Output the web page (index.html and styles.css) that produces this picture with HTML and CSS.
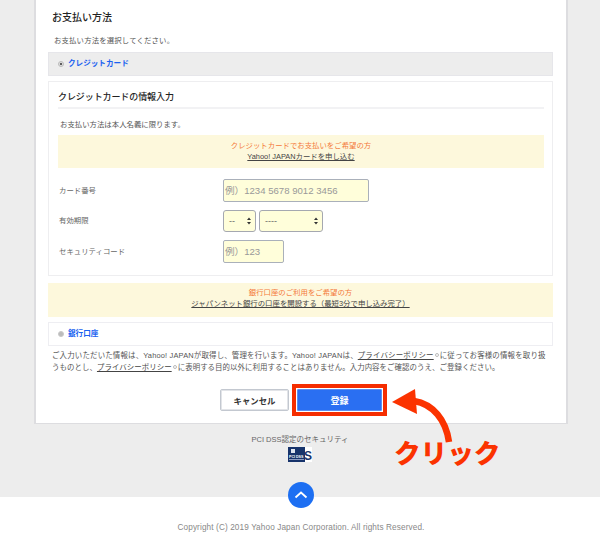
FILE: index.html
```html
<!DOCTYPE html>
<html lang="ja">
<head>
<meta charset="utf-8">
<title>お支払い方法</title>
<link rel="stylesheet" href="styles.css">
</head>
<body>
<div class="gray">
  <main class="card">
    <h2 class="title">お支払い方法</h2>
    <p class="lead">お支払い方法を選択してください。</p>
    <div class="method active"><span class="radio on"></span><a class="mlink">クレジットカード</a></div>
    <section class="panel">
      <h3 class="ptitle">クレジットカードの情報入力</h3>
      <p class="note">お支払い方法は本人名義に限ります。</p>
      <div class="promo inner">
        <div class="orange">クレジットカードでお支払いをご希望の方</div>
        <a class="plink">Yahoo! JAPANカードを申し込む</a>
      </div>
      <div class="rows">
        <div class="row r1"><label>カード番号</label><div class="field w146">例）1234 5678 9012 3456</div></div>
        <div class="row r2"><label>有効期限</label>
          <div class="sel w33"><span>--</span><svg class="updown" viewBox="0 0 5 9"><path d="M2.5 0 5 3.4H0zM2.5 9 0 5.6h5z"/></svg></div>
          <div class="sel w64"><span>----</span><svg class="updown" viewBox="0 0 5 9"><path d="M2.5 0 5 3.4H0zM2.5 9 0 5.6h5z"/></svg></div>
        </div>
        <div class="row r3"><label>セキュリティコード</label><div class="field w61">例）123</div></div>
      </div>
    </section>
    <div class="promo outer">
      <div class="orange">銀行口座のご利用をご希望の方</div>
      <a class="plink">ジャパンネット銀行の口座を開設する（最短3分で申し込み完了）</a>
    </div>
    <div class="method plain"><span class="radio"></span><a class="mlink">銀行口座</a></div>
    <p class="legal"><span class="line l1">ご入力いただいた情報は、Yahoo! JAPANが取得し、管理を行います。Yahoo! JAPANは、<a class="u">プライバシーポリシー</a><i class="ext"></i>に従ってお客様の情報を取り扱</span><span class="line l2">うものとし、<a class="u">プライバシーポリシー</a><i class="ext"></i>に表明する目的以外に利用することはありません。入力内容をご確認のうえ、ご登録ください。</span></p>
    <div class="actions">
      <button class="btn cancel">キャンセル</button>
      <span class="redbox"><button class="btn submit">登録</button></span>
    </div>
  </main>
  <div class="pci">
    <div class="pcitext">PCI DSS認定のセキュリティ</div>
    <svg class="pcilogo" viewBox="0 0 24 15" aria-label="PCI DSS">
      <rect width="24" height="15" fill="#fff"/>
      <rect width="17" height="15" fill="#17336b"/>
      <rect x="3" y="2" width="4" height="4" fill="#dfe5f0"/>
      <text x="1" y="10.5" class="pcism">PCI DSS</text>
      <rect x="1" y="12" width="15" height="1" fill="#8b9ac0"/>
      <text x="16" y="12.6" class="pcibig">S</text>
    </svg>
  </div>
  <button class="top" aria-label="ページ上部へ"><svg viewBox="0 0 26 26"><path d="M7.5 15.5 13 10.5l5.5 5" fill="none" stroke="#fff" stroke-width="1.8"/></svg></button>
</div>
<footer class="foot">Copyright (C) 2019 Yahoo Japan Corporation. All rights Reserved.</footer>
<svg class="arrow" viewBox="0 0 120 70"><path d="M22 16C41 19 54 35 57 57" fill="none" stroke="#fb3300" stroke-width="6.5"/><path d="M0 17 23 4 25 29z" fill="#fb3300"/></svg>
<div class="click">クリック</div>
</body>
</html>
```
FILE: styles.css
```css
*{box-sizing:border-box}
html,body{margin:0;padding:0;height:540px;overflow:hidden}
body{position:relative;background:#fff;font-family:"Liberation Sans","Noto Sans CJK JP",sans-serif;color:#555;font-size:7.4px;line-height:12px}
p,h2,h3{margin:0}
.gray{background:#ededed;height:497px;position:relative;padding-left:34px}
.card{width:534px;height:424px;background:#fff;border:solid #dddde0;border-width:0 2px 1px 2px;padding:12px 12px 0 12px}
.title{font-size:10px;line-height:12px;font-weight:500;color:#222;padding-left:4px}
.lead{margin-top:11px;padding-left:6px;letter-spacing:.02em}
.method{height:24px;display:flex;align-items:center;padding-left:9px;gap:4px;width:505px}
.active{margin-top:5px;background:#ededed;border:1px solid #e6e6ea}
.plain{margin-top:5px;background:#fff;border:1px solid #eeeef2;height:24px}
.mlink{color:#1a62f0;font-weight:700;font-size:7.6px}
.radio{width:6px;height:6px;border-radius:50%;background:#bbb;border:1px solid #c8c8c8;display:block;position:relative}
.radio.on{background:#ddd;border-color:#bbb}
.radio.on::after{content:"";position:absolute;left:1px;top:1px;width:2px;height:2px;border-radius:50%;background:#333}
.panel{margin-top:5px;width:505px;height:195px;border:1px solid #eeeef0;padding:0 8px 0 9px}
.ptitle{font-size:9px;font-weight:500;color:#222;line-height:12px;padding-top:9px;height:27px;border-bottom:2px solid #f2f2f4;letter-spacing:-.01em}
.note{margin-top:10px;padding-left:2px;height:12px}
.promo{background:#fdf8dc;text-align:center}
.inner{margin-top:4px;height:33px;padding-top:5px}
.outer{margin-top:7px;height:34px;width:505px;padding-top:4px}
.orange{color:#f4793a;height:11px;line-height:11px}
.plink{display:block;color:#444;text-decoration:underline;line-height:11px}
.rows{padding-top:11px}
.row{display:flex;align-items:center;gap:3px}
.row label{width:162px;padding-left:1px;color:#666}
.r1{height:23px}
.r2{height:22px;margin-top:8px}
.r3{height:23px;margin-top:8px}
.field{height:100%;background:#fffeda;border:1px solid #aab0ba;border-radius:2px;color:#999;font-size:9.6px;padding-left:1px;display:flex;align-items:center}
.w146{width:146px}
.w61{width:61px}
.sel{height:100%;background:#fffeda;border:1px solid #a5a8b0;border-radius:3px;display:flex;align-items:center;justify-content:space-between;padding:0 4px 0 5px;color:#666;font-size:9px}
.w33{width:33px}
.w64{width:64px}
.updown{width:4px;height:8px;fill:#333}
.legal{margin-top:4px;padding-left:4px;white-space:nowrap;font-size:7.45px;color:#555;width:505px}
.line{display:block;height:12px;line-height:12px}
.l1{letter-spacing:.17px}
.l2{letter-spacing:.05px}
.u{text-decoration:underline;color:#444}
.ext{display:inline-block;width:4px;height:4px;border:1px solid #bbb;border-radius:50%;margin:0 1px;vertical-align:1px}
.actions{margin-top:10px;display:flex;align-items:center;padding-left:172px;gap:3px}
.btn{font-family:inherit;font-weight:700;padding:0;display:block}
.cancel{width:69px;height:22px;background:#fff;border:1px solid #c3c8d0;border-radius:2px;color:#333;box-shadow:inset 0 0 0 1px #e2e4e8;font-size:8.4px}
.redbox{display:block;border:4px solid #f52d00;padding:1px;background:#fff}
.submit{width:85px;height:22px;background:#2a6ff2;border:1px solid #5b8ff0;border-radius:1px;color:#fff;font-size:9px}
.pci{display:flex;flex-direction:column;align-items:center;padding-top:10px;width:532px}
.pcitext{font-size:7.5px;line-height:12px;color:#666}
.pcilogo{width:24px;height:15px;display:block;margin-top:1px}
.pcism{font-family:"Liberation Sans",sans-serif;font-size:3.6px;font-weight:700;fill:#fff}
.pcibig{font-family:"Liberation Sans",sans-serif;font-size:12px;font-weight:700;fill:#17336b}
.top{position:absolute;left:288px;top:482px;width:26px;height:26px;border-radius:50%;background:#1d6ff2;border:0;padding:0}
.top svg{display:block;width:26px;height:26px}
.foot{height:43px;padding-top:25px;text-align:center;color:#888;font-size:8.2px;line-height:12px;padding-left:2px;letter-spacing:.015em}
.arrow{position:absolute;left:392px;top:385px;width:120px;height:70px}
.click{position:absolute;left:394px;top:438px;font-size:26.6px;line-height:32px;font-weight:900;color:#fb3300;white-space:nowrap}
```
